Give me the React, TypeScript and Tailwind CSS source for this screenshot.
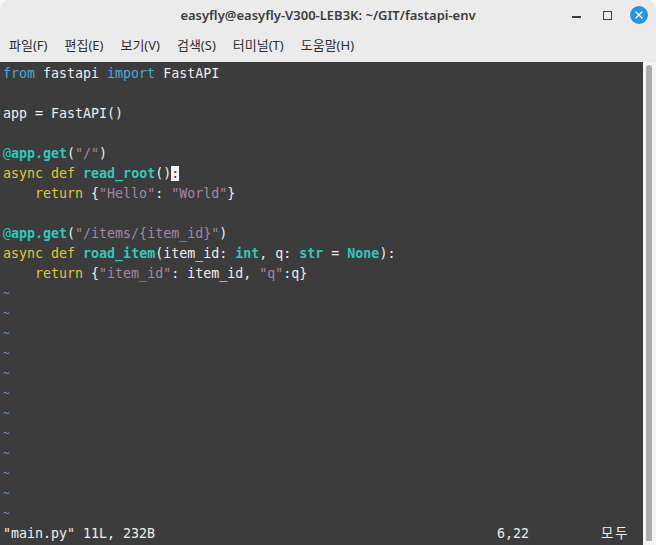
import { X } from "lucide-react";

type Seg = { t: string; c?: string; b?: boolean };

const KW = "text-[#4aa9dc]";
const ST = "text-[#e3c33c]";
const FN = "text-[#33c6c0]";
const STR = "text-[#a584a8]";

const code: Seg[][] = [
  [{ t: "from", c: KW }, { t: " fastapi " }, { t: "import", c: KW }, { t: " FastAPI" }],
  [],
  [{ t: "app = FastAPI()" }],
  [],
  [{ t: "@", c: FN }, { t: "app.get", c: FN, b: true }, { t: "(" }, { t: '"/"', c: STR }, { t: ")" }],
  [
    { t: "async", c: ST },
    { t: " " },
    { t: "def", c: ST },
    { t: " " },
    { t: "read_root", c: FN, b: true },
    { t: "()" },
    { t: "CURSOR" },
  ],
  [{ t: "    " }, { t: "return", c: ST }, { t: " {" }, { t: '"Hello"', c: STR }, { t: ": " }, { t: '"World"', c: STR }, { t: "}" }],
  [],
  [{ t: "@", c: FN }, { t: "app.get", c: FN, b: true }, { t: "(" }, { t: '"/items/{item_id}"', c: STR }, { t: ")" }],
  [
    { t: "async", c: ST },
    { t: " " },
    { t: "def", c: ST },
    { t: " " },
    { t: "road_item", c: FN, b: true },
    { t: "(item_id: " },
    { t: "int", c: FN, b: true },
    { t: ", q: " },
    { t: "str", c: FN, b: true },
    { t: " = " },
    { t: "None", c: FN, b: true },
    { t: "):" },
  ],
  [{ t: "    " }, { t: "return", c: ST }, { t: " {" }, { t: '"item_id"', c: STR }, { t: ": item_id, " }, { t: '"q"', c: STR }, { t: ":q}" }],
];

const menus = ["파일(F)", "편집(E)", "보기(V)", "검색(S)", "터미널(T)", "도움말(H)"];

export default function App() {
  return (
    <div className="w-[656px] h-[545px] bg-[#f6f6f6] flex flex-col overflow-hidden">
      <div className="h-[30px] bg-[#ebebeb] rounded-t-[10px] relative flex items-center justify-center font-['Noto_Sans','Noto_Sans_CJK_KR',sans-serif] text-[13px] font-semibold text-[#3c3c3c]">
        <span className="mt-[1px]">easyfly@easyfly-V300-LEB3K: ~/GIT/fastapi-env</span>
        <div className="absolute left-[572px] top-[16px] w-[9px] h-[1.5px] bg-[#3c3c3c]" />
        <div className="absolute left-[603px] top-[11px] w-[9px] h-[9px] border-[1.5px] border-[#3c3c3c]" />
        <div className="absolute left-[630px] top-[6px] w-[18px] h-[18px] rounded-full bg-[#2b94dc] flex items-center justify-center">
          <X size={12} strokeWidth={2.4} color="#ffffff" />
        </div>
      </div>
      <div className="h-[32px] bg-[#ebebeb] flex items-center pl-[9px] gap-[17px] font-['Noto_Sans','Noto_Sans_CJK_KR',sans-serif] text-[13px] text-[#2e2e2e] pb-[1px]">
        {menus.map((m) => (
          <span key={m}>{m}</span>
        ))}
      </div>
      <div className="flex-1 flex">
        <div className="flex-1 bg-[#3c3c3c] pt-[2px] pl-[3px] font-['DejaVu_Sans_Mono',monospace] text-[13.3px] leading-[20px] text-[#eeeeee] whitespace-pre">
          {code.map((line, i) => (
            <div key={i} className="h-[20px]">
              {line.map((s, j) =>
                s.t === "CURSOR" ? (
                  <span key={j} className="bg-[#f2f2f2] text-[#3c3c3c]">:</span>
                ) : (
                  <span key={j} className={`${s.c ?? ""} ${s.b ? "font-bold" : ""}`}>
                    {s.t}
                  </span>
                )
              )}
            </div>
          ))}
          {Array.from({ length: 12 }).map((_, i) => (
            <div key={i} className="h-[20px] text-[#6f93cf] text-[11px]">~</div>
          ))}
          <div className="h-[20px] flex">
            <span className="w-[494px]">"main.py" 11L, 232B</span>
            <span className="w-[104px]">6,22</span>
            <span className="font-['DejaVu_Sans_Mono','Noto_Sans_CJK_KR',monospace] tracking-[2px]">모두</span>
          </div>
        </div>
        <div className="w-[13px] bg-[#f4f4f4] flex pl-[3px] pr-[4px] pt-[3px] pb-[4px]">
          <div className="flex-1 bg-[#acacac] rounded-t-[3px]" />
        </div>
      </div>
    </div>
  );
}
